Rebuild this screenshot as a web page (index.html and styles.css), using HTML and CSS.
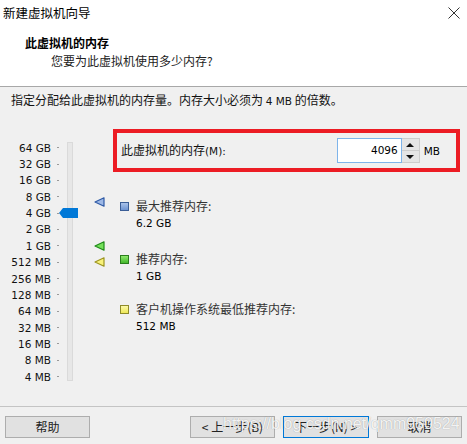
FILE: index.html
```html
<!DOCTYPE html>
<html lang="zh">
<head>
<meta charset="utf-8">
<title>新建虚拟机向导</title>
<link rel="stylesheet" href="styles.css">
</head>
<body>
<div class="window">
  <div class="titlebar">
    <span class="title">新建虚拟机向导</span>
    <svg class="close" width="12" height="12" viewBox="0 0 12 12"><path d="M0.5 0.5 L11.5 11.5 M11.5 0.5 L0.5 11.5" stroke="#333" stroke-width="1" fill="none"/></svg>
  </div>
  <div class="header">
    <div class="h-title">此虚拟机的内存</div>
    <div class="h-sub">您要为此虚拟机使用多少内存?</div>
  </div>
  <div class="intro">指定分配给此虚拟机的内存量。内存大小必须为 <span class="lat">4 MB</span> 的倍数。</div>
  <div class="main">
    <div class="scale">
      <ul class="labels">
        <li><span class="lat">64 GB</span><i></i></li>
        <li><span class="lat">32 GB</span><i></i></li>
        <li><span class="lat">16 GB</span><i></i></li>
        <li><span class="lat">8 GB</span><i></i></li>
        <li><span class="lat">4 GB</span><i></i></li>
        <li><span class="lat">2 GB</span><i></i></li>
        <li><span class="lat">1 GB</span><i></i></li>
        <li><span class="lat">512 MB</span><i></i></li>
        <li><span class="lat">256 MB</span><i></i></li>
        <li><span class="lat">128 MB</span><i></i></li>
        <li><span class="lat">64 MB</span><i></i></li>
        <li><span class="lat">32 MB</span><i></i></li>
        <li><span class="lat">16 MB</span><i></i></li>
        <li><span class="lat">8 MB</span><i></i></li>
        <li><span class="lat">4 MB</span><i></i></li>
      </ul>
      <div class="track"></div>
      <div class="thumb"></div>
      <svg class="pin pin-max" width="11" height="10" viewBox="0 0 11 10"><polygon points="1,5 10,0.8 10,9.2" fill="#9db8e6" stroke="#2f5aa6" stroke-width="1.2" stroke-linejoin="round"/></svg>
      <svg class="pin pin-rec" width="11" height="10" viewBox="0 0 11 10"><polygon points="1,5 10,0.8 10,9.2" fill="#74e05a" stroke="#1f8a18" stroke-width="1.2" stroke-linejoin="round"/></svg>
      <svg class="pin pin-min" width="11" height="10" viewBox="0 0 11 10"><polygon points="1,5 10,0.8 10,9.2" fill="#f8f27a" stroke="#9c9420" stroke-width="1.2" stroke-linejoin="round"/></svg>
    </div>
    <div class="panel">
      <div class="mem-box">
        <span class="mem-label">此虚拟机的内存<span class="lat">(M):</span></span>
        <div class="spin-group">
          <div class="input lat">4096</div>
          <div class="spinner">
            <div class="half"><span class="arrow-up"></span></div>
            <div class="half"><span class="arrow-down"></span></div>
          </div>
          <span class="unit lat">MB</span>
        </div>
      </div>
      <div class="rec rec-1">
        <span class="swatch sw-blue"></span>
        <div class="rec-text">
          <div class="rec-label">最大推荐内存:</div>
          <div class="rec-value lat">6.2 GB</div>
        </div>
      </div>
      <div class="rec rec-2">
        <span class="swatch sw-green"></span>
        <div class="rec-text">
          <div class="rec-label">推荐内存:</div>
          <div class="rec-value lat">1 GB</div>
        </div>
      </div>
      <div class="rec rec-3">
        <span class="swatch sw-yellow"></span>
        <div class="rec-text">
          <div class="rec-label">客户机操作系统最低推荐内存:</div>
          <div class="rec-value lat">512 MB</div>
        </div>
      </div>
    </div>
  </div>
  <div class="footer">
    <div class="btn help">帮助</div>
    <div class="btn">&lt; 上一步(B)</div>
    <div class="btn primary">下一步(N) &gt;</div>
    <div class="btn">取消</div>
  </div>
  <div class="watermark">https://blog.csdn.net/qmm950524</div>
</div>
</body>
</html>
```
FILE: styles.css
```css
body {
  margin: 0;
  background: #f0f0f0;
}

.window {
  width: 467px;
  height: 444px;
  display: flex;
  flex-direction: column;
  position: relative;
  overflow: hidden;
  background: #f0f0f0;
  font-family: "Noto Sans CJK SC", sans-serif;
  font-size: 12px;
  color: #000;
}

.lat {
  font-family: "DejaVu Sans", sans-serif;
  font-size: 10.5px;
}

.titlebar {
  height: 26px;
  background: #fff;
  display: flex;
  align-items: center;
  justify-content: space-between;
  padding: 0 7px 0 3px;
}

.title {
  font-size: 12.5px;
  line-height: 16px;
}

.header {
  height: 61px;
  box-sizing: border-box;
  background: #fff;
  border-bottom: 1px solid #a8a8a8;
  padding: 9px 0 0 25px;
}

.h-title {
  font-weight: bold;
  line-height: 16px;
}

.h-sub {
  margin: 2px 0 0 26px;
  line-height: 16px;
  color: #222;
}

.intro {
  padding: 5px 0 0 11px;
  line-height: 16px;
  color: #111;
}

.main {
  display: flex;
  margin-top: 20px;
}

.scale {
  position: relative;
  width: 113px;
  display: flex;
  align-items: flex-start;
}

.labels {
  list-style: none;
  margin: 0;
  padding: 10.5px 0 0 0;
  width: 60px;
}

.labels li {
  height: 16.36px;
  display: flex;
  align-items: center;
  color: #111;
}

.labels li span {
  width: 51px;
  text-align: right;
  white-space: nowrap;
}

.labels li i {
  width: 2px;
  height: 1px;
  margin-left: 6px;
  background: #9a9a9a;
}

.track {
  margin: 13px 0 0 7px;
  width: 4px;
  height: 237px;
  border: 1px solid #dadada;
  background: #e7e7e7;
}

.thumb {
  position: absolute;
  left: 59px;
  top: 79px;
  width: 19px;
  height: 10px;
  background: #0078d7;
  clip-path: polygon(0 50%, 4px 0, 100% 0, 100% 100%, 4px 100%);
}

.pin {
  position: absolute;
  left: 94px;
}

.pin-max { top: 68px; }
.pin-rec { top: 112px; }
.pin-min { top: 128px; }

.panel {
  width: 347px;
}

.mem-box {
  height: 43px;
  box-sizing: border-box;
  border: 4px solid #ec1c24;
  display: flex;
  align-items: center;
  padding: 0 16px 0 4px;
}

.mem-label {
  line-height: 16px;
  color: #111;
}

.spin-group {
  margin-left: auto;
  display: flex;
  align-items: center;
}

.input {
  width: 65px;
  height: 25px;
  box-sizing: border-box;
  border: 1px solid #7eb4ea;
  background: #fff;
  text-align: right;
  padding-right: 3px;
  line-height: 23px;
}

.spinner {
  width: 18px;
  height: 25px;
  box-sizing: border-box;
  border: 1px solid #cdcdcd;
  border-left: none;
  background: #e5e5e5;
  display: flex;
  flex-direction: column;
}

.half {
  flex: 1;
  display: flex;
  align-items: center;
  justify-content: center;
}

.half + .half {
  border-top: 1px solid #cdcdcd;
}

.arrow-up {
  width: 0;
  height: 0;
  border-left: 4px solid transparent;
  border-right: 4px solid transparent;
  border-bottom: 4px solid #111;
}

.arrow-down {
  width: 0;
  height: 0;
  border-left: 4px solid transparent;
  border-right: 4px solid transparent;
  border-top: 4px solid #111;
}

.unit {
  margin-left: 4px;
}

.rec {
  display: flex;
  align-items: flex-start;
  padding-left: 7px;
}

.rec-1 { margin-top: 26px; }
.rec-2 { margin-top: 20px; }
.rec-3 { margin-top: 17px; }

.swatch {
  width: 9px;
  height: 9px;
  box-sizing: border-box;
  border: 1px solid;
  margin-top: 3.5px;
}

.sw-blue {
  border-color: #3a5d96;
  background: linear-gradient(#a9c2ea, #6f95d2);
}

.sw-green {
  border-color: #2b7d1c;
  background: linear-gradient(#8ee86c, #44b82c);
}

.sw-yellow {
  border-color: #8e8a2a;
  background: linear-gradient(#fbf8a8, #eee858);
}

.rec-text {
  margin-left: 7px;
}

.rec-label {
  line-height: 16px;
  color: #333;
}

.rec-value {
  line-height: 16px;
  margin-top: 1px;
}

.footer {
  margin-top: auto;
  height: 38px;
  box-sizing: border-box;
  border-top: 1px solid #c4c4c4;
  display: flex;
  align-items: flex-start;
  gap: 8px;
  padding: 9px 5px 0;
}

.btn {
  width: 85px;
  height: 22px;
  box-sizing: border-box;
  border: 1px solid #adadad;
  background: #e1e1e1;
  line-height: 20px;
  text-align: center;
  color: #222;
}

.help {
  margin-right: auto;
}

.primary {
  width: 86px;
  border-color: #0078d7;
}

.watermark {
  position: absolute;
  left: 223px;
  top: 414px;
  font-family: "Liberation Sans", sans-serif;
  font-size: 16px;
  line-height: 20px;
  color: rgba(255, 255, 255, 0.9);
  text-shadow: 0 0 1px rgba(0, 0, 0, 0.35);
  white-space: nowrap;
}
```
